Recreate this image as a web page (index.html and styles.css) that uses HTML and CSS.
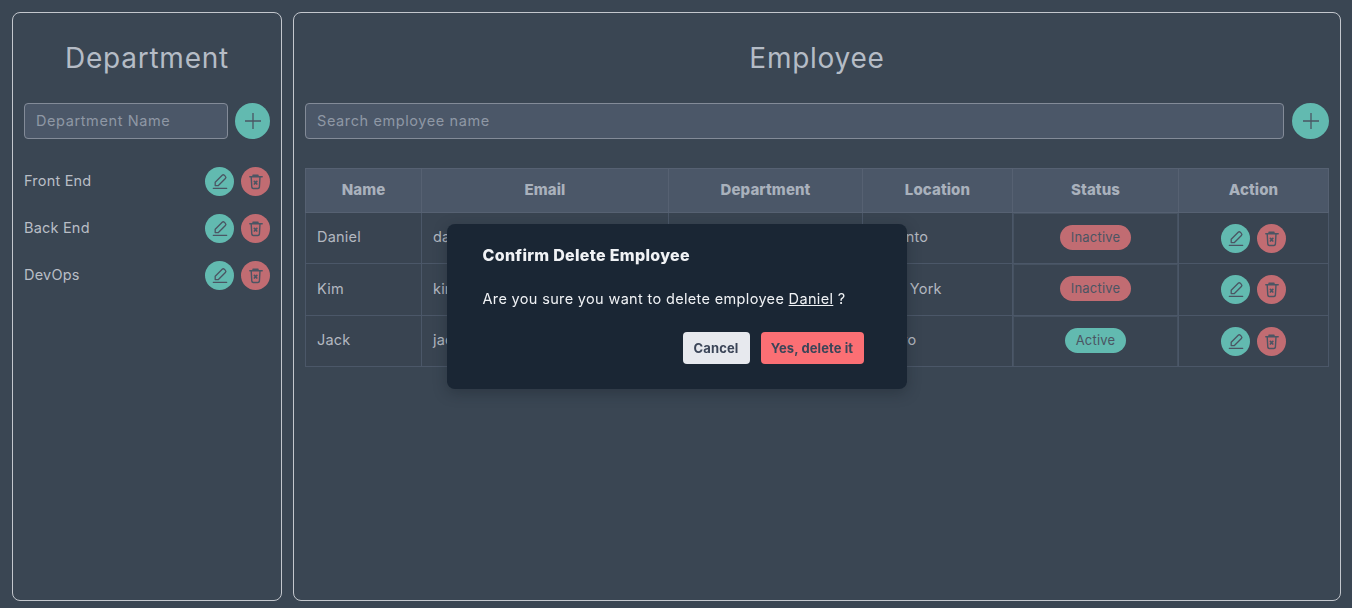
FILE: index.html
```html
<!DOCTYPE html>
<html lang="en">
<head>
<meta charset="utf-8">
<title>Employee Management</title>
<link rel="stylesheet" href="styles.css">
</head>
<body>
<svg class="defs" width="0" height="0" aria-hidden="true">
  <symbol id="i-edit" viewBox="0 0 29 29"><path d="M8.300 21.300h13.400M10.200 18.600v-3.300l7-7a1.500 1.500 0 0 1 2.100 0l1.100 1.100a1.500 1.500 0 0 1 0 2.100l-7 7z" fill="none" stroke="currentColor" stroke-width="1.300" stroke-linecap="round" stroke-linejoin="round"/></symbol>
  <symbol id="i-del" viewBox="0 0 29 29"><path d="M8.800 9.800h12.400M12 9.800V8.200h5v1.600M10.200 9.800l.6 10.400a1.500 1.500 0 0 0 1.500 1.300h4.600a1.500 1.500 0 0 0 1.500-1.300l.6-10.400" fill="none" stroke="currentColor" stroke-width="1.400" stroke-linecap="round" stroke-linejoin="round"/><path d="M13.400 14.400l2.400 2.600M15.800 14.400l-2.400 2.600" fill="none" stroke="currentColor" stroke-width="1.700" stroke-linecap="round"/></symbol>
</svg>
<main class="page">
  <section class="panel panel-dept">
    <h1 class="title">Department</h1>
    <div class="add-row">
      <input class="field" type="text" placeholder="Department Name">
      <button class="add-btn" aria-label="Add department"><svg viewBox="0 0 24 24" width="24" height="24"><path d="M12 4v16M4 12h16" fill="none" stroke="currentColor" stroke-width="1.300"/></svg></button>
    </div>
    <ul class="dept-list">
      <li class="dept-item"><span class="dept-name">Front End</span><span class="actions"><button class="icon-btn edit"><svg><use href="#i-edit"/></svg></button><button class="icon-btn del"><svg><use href="#i-del"/></svg></button></span></li>
      <li class="dept-item"><span class="dept-name">Back End</span><span class="actions"><button class="icon-btn edit"><svg><use href="#i-edit"/></svg></button><button class="icon-btn del"><svg><use href="#i-del"/></svg></button></span></li>
      <li class="dept-item"><span class="dept-name">DevOps</span><span class="actions"><button class="icon-btn edit"><svg><use href="#i-edit"/></svg></button><button class="icon-btn del"><svg><use href="#i-del"/></svg></button></span></li>
    </ul>
  </section>
  <section class="panel panel-emp">
    <h1 class="title">Employee</h1>
    <div class="add-row">
      <input class="field" type="text" placeholder="Search employee name">
      <button class="add-btn" aria-label="Add employee"><svg viewBox="0 0 24 24" width="24" height="24"><path d="M12 4v16M4 12h16" fill="none" stroke="currentColor" stroke-width="1.300"/></svg></button>
    </div>
    <table class="emp-table">
      <colgroup><col class="c1"><col class="c2"><col class="c3"><col class="c4"><col class="c5"><col class="c6"></colgroup>
      <thead><tr><th>Name</th><th>Email</th><th>Department</th><th>Location</th><th>Status</th><th>Action</th></tr></thead>
      <tbody>
        <tr class="r1"><td>Daniel</td><td>daniel@gmail.com</td><td>Front End</td><td>Toronto</td><td class="status"><span class="badge off">Inactive</span></td><td class="act"><span class="actions"><button class="icon-btn edit"><svg><use href="#i-edit"/></svg></button><button class="icon-btn del"><svg><use href="#i-del"/></svg></button></span></td></tr>
        <tr class="r2"><td>Kim</td><td>kim@gmail.com</td><td>Back End</td><td>New York</td><td class="status"><span class="badge off">Inactive</span></td><td class="act"><span class="actions"><button class="icon-btn edit"><svg><use href="#i-edit"/></svg></button><button class="icon-btn del"><svg><use href="#i-del"/></svg></button></span></td></tr>
        <tr class="r3"><td>Jack</td><td>jack@gmail.com</td><td>DevOps</td><td>Tokyo</td><td class="status"><span class="badge on">Active</span></td><td class="act"><span class="actions"><button class="icon-btn edit"><svg><use href="#i-edit"/></svg></button><button class="icon-btn del"><svg><use href="#i-del"/></svg></button></span></td></tr>
      </tbody>
    </table>
  </section>
</main>
<div class="overlay">
  <div class="modal" role="dialog">
    <h2 class="modal-title">Confirm Delete Employee</h2>
    <p class="modal-text">Are you sure you want to delete employee <u>Daniel</u> ?</p>
    <div class="modal-actions">
      <button class="btn cancel">Cancel</button>
      <button class="btn danger">Yes, delete it</button>
    </div>
  </div>
</div>
</body>
</html>
```
FILE: styles.css
```css
* { box-sizing: border-box; }
html, body { height: 100%; }
body {
  margin: 0;
  background: #3a4653;
  color: #b9bec6;
  font-family: Inter, "Noto Sans", "Liberation Sans", sans-serif;
  font-size: 14px;
  overflow: hidden;
}
.defs { position: absolute; }
.page {
  display: flex;
  gap: 11px;
  height: 608px;
  padding: 12px 11px 7px 12px;
}
.panel {
  border: 1px solid #c3c7cd;
  border-radius: 8px;
  padding: 0 11px;
}
.panel-dept { width: 270px; flex: none; }
.panel-emp { flex: 1; min-width: 0; }
.title {
  margin: 0;
  height: 90px;
  line-height: 90px;
  text-align: center;
  font-size: 28px;
  font-weight: 400;
  letter-spacing: 0.75px;
  color: #b5bcc6;
}
.add-row { display: flex; gap: 7px; height: 36px; }
.panel-emp .add-row { gap: 8px; }
.field {
  flex: 1;
  min-width: 0;
  height: 36px;
  padding: 0 11px 2px;
  background: #4b5768;
  border: 1px solid #838b98;
  border-radius: 4px;
  color: #b9bec6;
  font: 400 14.5px Inter, "Noto Sans", sans-serif;
  letter-spacing: 0.6px;
  outline: none;
}
.field::placeholder { color: #8f98a5; opacity: 1; }
.add-btn {
  flex: none;
  width: 35px;
  height: 36px;
  padding: 0;
  border: 0;
  border-radius: 50%;
  background: #62bab0;
  color: #4b5563;
  display: grid;
  place-items: center;
}
.panel-emp .add-btn { width: 37px; }
.dept-list { list-style: none; margin: 28px 0 0; padding: 0; }
.dept-item {
  display: flex;
  align-items: center;
  justify-content: space-between;
  height: 29px;
  margin-bottom: 18px;
  color: #b9bec6;
}
.dept-name { padding-bottom: 2px; font-size: 14.5px; letter-spacing: 0.2px; }
.actions { display: inline-flex; gap: 7px; vertical-align: middle; }
.icon-btn {
  width: 29px;
  height: 29px;
  padding: 0;
  border: 0;
  border-radius: 50%;
  display: block;
  color: #4b5563;
}
.icon-btn svg { width: 29px; height: 29px; display: block; }
.edit { background: #62bab0; }
.del { background: #c16c72; }
.emp-table {
  width: 1024px;
  margin-top: 29px;
  border-collapse: collapse;
  table-layout: fixed;
  color: #b3b8c0;
}
.c1 { width: 116px; }
.c2 { width: 247px; }
.c3 { width: 194px; }
.c4 { width: 150px; }
.c5 { width: 166px; }
.c6 { width: 150px; }
.emp-table th, .emp-table td { border: 1px solid #4b5768; }
.emp-table th {
  height: 44px;
  padding: 0 0 2px;
  background: #4b5768;
  border-color: #566172;
  font-size: 15px;
  font-weight: 800;
  letter-spacing: 0.1px;
  color: #a9b1bc;
}
.emp-table td {
  padding: 0 11px 3px;
  background: #394451;
  font-size: 14.5px;
  letter-spacing: 0.2px;
}
.r1 { height: 51px; }
.r2 { height: 52px; }
.r3 { height: 51px; }
.emp-table .status, .emp-table .act { text-align: center; }
.emp-table .act { padding-bottom: 0; }
.emp-table .status {
  padding-bottom: 2px;
  box-shadow: inset 1px 0 0 #465261, inset -1px 0 0 #465261, inset 0 1px 0 #465261;
}
.badge {
  display: inline-block;
  height: 25px;
  line-height: 25px;
  border-radius: 13px;
  padding: 0 11px;
  font-size: 13px;
  letter-spacing: 0.2px;
  color: #4b5563;
}
.off { background: #c16c72; }
.on { background: #62bab0; }
.overlay {
  position: fixed;
  inset: 0;
  padding: 5px 0 0 1px;
  display: flex;
  align-items: center;
  justify-content: center;
}
.modal {
  width: 460px;
  height: 165px;
  padding: 20px 43px 0 36px;
  background: #1a2634;
  border-radius: 8px;
  box-shadow: 0 4px 14px rgba(20, 28, 38, 0.35);
  color: #f0f2f5;
}
.modal-title {
  margin: 0;
  font-size: 16px;
  line-height: 22px;
  font-weight: 800;
  letter-spacing: 0.3px;
}
.modal-text {
  margin: 22px 0 0;
  font-size: 14.5px;
  letter-spacing: 0.34px;
  line-height: 22px;
}
.modal-actions {
  display: flex;
  justify-content: flex-end;
  gap: 11px;
  margin-top: 22px;
}
.btn {
  height: 32px;
  padding: 0;
  border: 0;
  border-radius: 4px;
  font: 700 13px Inter, "Noto Sans", sans-serif;
  letter-spacing: 0.1px;
  color: #3b4558;
}
.cancel { width: 67px; background: #e7e9ee; }
.danger { width: 103px; background: #fb6f74; }
```
